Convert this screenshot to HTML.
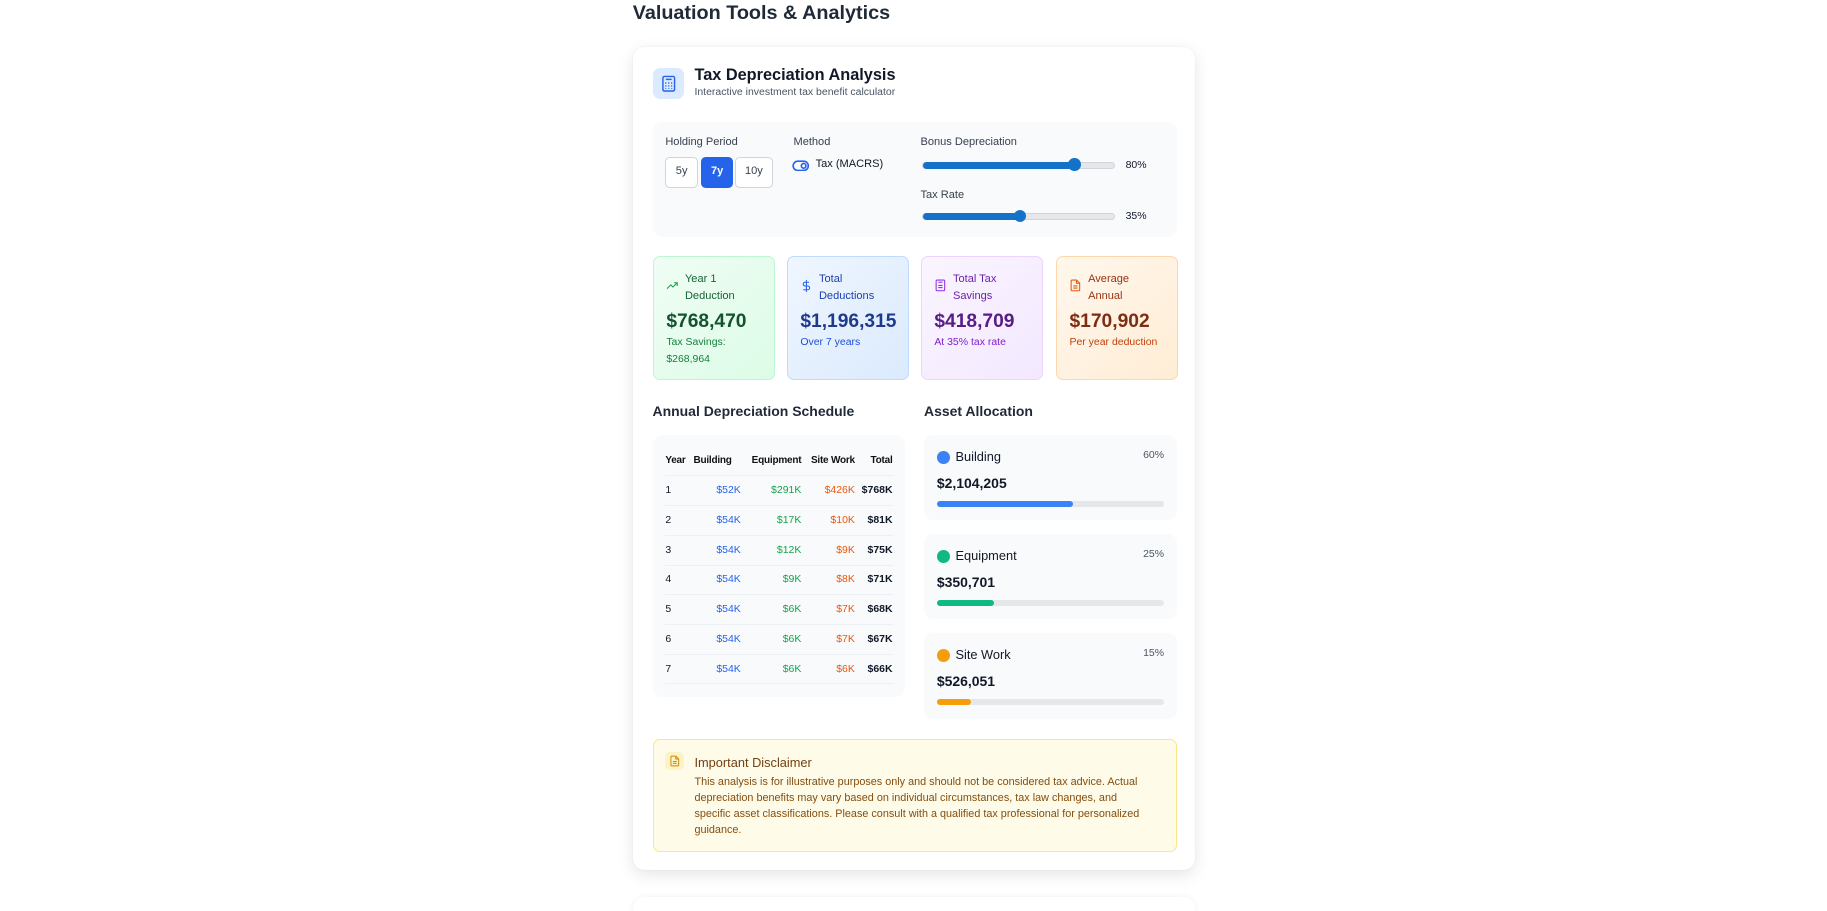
<!DOCTYPE html>
<html><head><meta charset="utf-8"><style>
*{box-sizing:border-box;margin:0;padding:0}
html,body{width:1827px;height:911px;overflow:hidden;background:#fff}
body{font-family:"Liberation Sans",sans-serif;color:#111827}
#w{zoom:1.1652;position:relative;width:1568px;height:782px}
.a{position:absolute}
h1{position:absolute;left:543px;top:2px;font-size:17px;font-weight:700;color:#1f2937}
.card{left:543px;top:40px;width:483px;height:707px;border-radius:10px;background:#fff;box-shadow:0 4px 14px rgba(0,0,0,.10),0 0 2px rgba(0,0,0,.05)}
.card2{left:543px;top:770px;width:483px;height:40px;border-radius:10px;background:#fff;box-shadow:0 0 6px rgba(0,0,0,.06)}
.lbl{font-size:9.5px;color:#374151}
.btn{top:135px;height:26px;border:1px solid #d1d5db;border-radius:4px;font-size:9.5px;text-align:center;line-height:24px;background:#fff;color:#374151}
.track{height:6px;border-radius:3px;background:#e5e7eb;border:1px solid #d1d5db}
.fill{position:absolute;left:0;top:-1px;height:6px;border-radius:3px;background:#1572c9}
.thumb{position:absolute;top:-4px;width:11px;height:11px;border-radius:50%;background:#1572c9}
.stat{top:220px;width:105px;height:106px;border-radius:6px;border:1px solid}
.stat .l{position:absolute;left:27px;top:12px;font-size:9.5px;line-height:14px}
.stat .v{position:absolute;left:11px;top:46px;font-size:16.5px;font-weight:700}
.stat .s{position:absolute;left:11px;top:67px;font-size:9px;line-height:14px}
.stat svg{position:absolute;left:11px;top:19px}
h3{position:absolute;font-size:12px;font-weight:600;color:#1f2937}
table{border-collapse:collapse;font-size:9px}
td,th{height:25.5px;padding:0;text-align:right;border-bottom:1px solid #edf0f3}
th{font-weight:700;color:#111;font-size:8.6px;letter-spacing:-.2px}
td:first-child,th:first-child{text-align:left}
.b{color:#2563eb}.g{color:#16a34a}.o{color:#ea580c}.t{font-weight:700}
.al{left:793px;width:217px;height:73px;border-radius:8px;background:#f8fafc}
.al .dot{position:absolute;left:11px;top:14px;width:11px;height:11px;border-radius:50%}
.al .n{position:absolute;left:27px;top:12px;font-size:11px}
.al .p{position:absolute;right:11px;top:13px;font-size:9px;color:#4b5563}
.al .v{position:absolute;left:11px;top:35px;font-size:12px;font-weight:700}
.al .bar{position:absolute;left:11px;top:57px;width:195px;height:5px;border-radius:3px;background:#e5e7eb}
.al .bar i{position:absolute;left:0;top:0;height:5px;border-radius:3px}
</style></head><body><div id="w">
<h1>Valuation Tools &amp; Analytics</h1>
<div class="a card2"></div>
<div class="a card"></div>
<div class="a" style="left:560px;top:58px;width:27px;height:27px;border-radius:6px;background:#dbeafe"></div>
<svg class="a" style="left:566px;top:64px" width="15" height="15" viewBox="0 0 24 24" fill="none" stroke="#2563eb" stroke-width="2"><rect x="4" y="2" width="16" height="20" rx="2"/><line x1="8" y1="6" x2="16" y2="6"/><path d="M8 10v2M12 10v2M16 10v2M8 14v2M12 14v2M16 14v2M8 18v1M12 18v1M16 18v1" stroke-width="1.6"/></svg>
<div class="a" style="left:596px;top:57px;font-size:14px;font-weight:700">Tax Depreciation Analysis</div>
<div class="a" style="left:596px;top:75px;font-size:9px;color:#4b5563">Interactive investment tax benefit calculator</div>

<div class="a" style="left:560px;top:105px;width:450px;height:98px;border-radius:8px;background:#f8fafc"></div>
<div class="a lbl" style="left:571px;top:117px">Holding Period</div>
<div class="a btn" style="left:571px;width:28px">5y</div>
<div class="a btn" style="left:602px;width:27px;background:#2563eb;border-color:#2563eb;color:#fff;font-weight:700">7y</div>
<div class="a btn" style="left:631px;width:32px">10y</div>
<div class="a lbl" style="left:681px;top:117px">Method</div>
<svg class="a" style="left:680px;top:137px" width="15" height="10" viewBox="0 0 15 10" fill="none" stroke="#2563eb" stroke-width="1.4"><rect x="1" y="1" width="13" height="8" rx="4"/><circle cx="10" cy="5" r="2"/></svg>
<div class="a" style="left:700px;top:136px;font-size:9.5px">Tax (MACRS)</div>
<div class="a lbl" style="left:790px;top:117px">Bonus Depreciation</div>
<div class="a track" style="left:791px;top:139px;width:166px"><div class="fill" style="width:133px"></div><div class="thumb" style="left:125px"></div></div>
<div class="a" style="left:966px;top:137px;font-size:9px">80%</div>
<div class="a lbl" style="left:790px;top:162px">Tax Rate</div>
<div class="a track" style="left:791px;top:183px;width:166px"><div class="fill" style="width:85px"></div><div class="thumb" style="left:78px"></div></div>
<div class="a" style="left:966px;top:181px;font-size:9px">35%</div>

<div class="a stat" style="left:560px;background:linear-gradient(135deg,#f0fdf4,#dcfce7);border-color:#bbf7d0">
<svg width="11" height="11" viewBox="0 0 24 24" fill="none" stroke="#16a34a" stroke-width="2"><path d="M2 18l7-7 4 4 8-8M15 7h6v6"/></svg>
<div class="l" style="color:#166534">Year 1<br>Deduction</div><div class="v" style="color:#14532d">$768,470</div><div class="s" style="color:#15803d">Tax Savings:<br>$268,964</div></div>
<div class="a stat" style="left:675px;background:linear-gradient(135deg,#eff6ff,#dbeafe);border-color:#bfdbfe">
<svg width="11" height="12" viewBox="0 0 24 24" fill="none" stroke="#2563eb" stroke-width="2"><path d="M12 1v22M17 5H9.5a3.5 3.5 0 0 0 0 7h5a3.5 3.5 0 0 1 0 7H6"/></svg>
<div class="l" style="color:#1e40af">Total<br>Deductions</div><div class="v" style="color:#1e3a8a">$1,196,315</div><div class="s" style="color:#1d4ed8">Over 7 years</div></div>
<div class="a stat" style="left:790px;background:linear-gradient(135deg,#faf5ff,#f3e8ff);border-color:#e9d5ff">
<svg width="11" height="11" viewBox="0 0 24 24" fill="none" stroke="#9333ea" stroke-width="2"><rect x="4" y="2" width="16" height="20" rx="2"/><line x1="8" y1="6" x2="16" y2="6"/><path d="M8 12h8M8 16h8"/></svg>
<div class="l" style="color:#6b21a8">Total Tax<br>Savings</div><div class="v" style="color:#581c87">$418,709</div><div class="s" style="color:#7e22ce">At 35% tax rate</div></div>
<div class="a stat" style="left:906px;background:linear-gradient(135deg,#fff7ed,#ffedd5);border-color:#fed7aa">
<svg width="11" height="11" viewBox="0 0 24 24" fill="none" stroke="#ea580c" stroke-width="2"><path d="M14 2H6a2 2 0 0 0-2 2v16a2 2 0 0 0 2 2h12a2 2 0 0 0 2-2V8z"/><path d="M14 2v6h6M8 13h8M8 17h8"/></svg>
<div class="l" style="color:#9a3412">Average<br>Annual</div><div class="v" style="color:#7c2d12">$170,902</div><div class="s" style="color:#c2410c">Per year deduction</div></div>

<h3 style="left:560px;top:346px">Annual Depreciation Schedule</h3>
<h3 style="left:793px;top:346px">Asset Allocation</h3>
<div class="a" style="left:560px;top:373px;width:217px;height:225px;border-radius:8px;background:#f8fafc"></div>
<table class="a" style="left:571px;top:383px;width:195px">
<tr><th>Year</th><th style="text-align:left;padding-left:3px">Building</th><th>Equipment</th><th>Site Work</th><th>Total</th></tr>
<tr><td>1</td><td class="b">$52K</td><td class="g">$291K</td><td class="o">$426K</td><td class="t">$768K</td></tr>
<tr><td>2</td><td class="b">$54K</td><td class="g">$17K</td><td class="o">$10K</td><td class="t">$81K</td></tr>
<tr><td>3</td><td class="b">$54K</td><td class="g">$12K</td><td class="o">$9K</td><td class="t">$75K</td></tr>
<tr><td>4</td><td class="b">$54K</td><td class="g">$9K</td><td class="o">$8K</td><td class="t">$71K</td></tr>
<tr><td>5</td><td class="b">$54K</td><td class="g">$6K</td><td class="o">$7K</td><td class="t">$68K</td></tr>
<tr><td>6</td><td class="b">$54K</td><td class="g">$6K</td><td class="o">$7K</td><td class="t">$67K</td></tr>
<tr><td>7</td><td class="b">$54K</td><td class="g">$6K</td><td class="o">$6K</td><td class="t">$66K</td></tr>
</table>

<div class="a al" style="top:373px"><div class="dot" style="background:#3b82f6"></div><div class="n">Building</div><div class="p">60%</div><div class="v">$2,104,205</div><div class="bar"><i style="width:117px;background:#3b82f6"></i></div></div>
<div class="a al" style="top:458px"><div class="dot" style="background:#10b981"></div><div class="n">Equipment</div><div class="p">25%</div><div class="v">$350,701</div><div class="bar"><i style="width:49px;background:#10b981"></i></div></div>
<div class="a al" style="top:543px;height:74px"><div class="dot" style="background:#f59e0b"></div><div class="n">Site Work</div><div class="p">15%</div><div class="v">$526,051</div><div class="bar"><i style="width:29px;background:#f59e0b"></i></div></div>

<div class="a" style="left:560px;top:634px;width:450px;height:97px;border-radius:6px;background:#fefce8;border:1px solid #fde68a"></div>
<div class="a" style="left:571px;top:645px;width:16px;height:16px;border-radius:4px;background:#fef3c7"></div>
<svg class="a" style="left:574px;top:647px" width="10" height="12" viewBox="0 0 24 24" fill="none" stroke="#ca8a04" stroke-width="2"><path d="M14 2H6a2 2 0 0 0-2 2v16a2 2 0 0 0 2 2h12a2 2 0 0 0 2-2V8z"/><path d="M14 2v6h6M8 13h8M8 17h8"/></svg>
<div class="a" style="left:596px;top:648px;font-size:11px;color:#713f12">Important Disclaimer</div>
<div class="a" style="left:596px;top:665px;width:392px;font-size:9.3px;line-height:13.7px;color:#854d0e">This analysis is for illustrative purposes only and should not be considered tax advice. Actual depreciation benefits may vary based on individual circumstances, tax law changes, and specific asset classifications. Please consult with a qualified tax professional for personalized guidance.</div>
</div></body></html>
